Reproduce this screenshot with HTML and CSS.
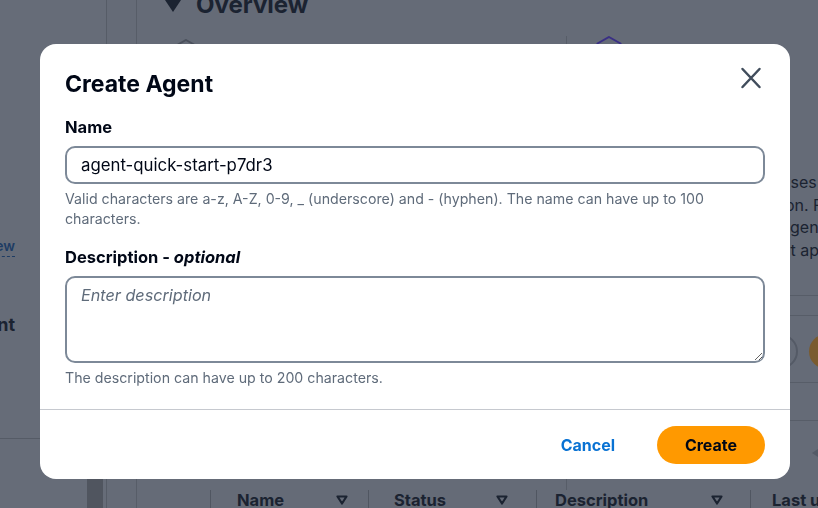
FILE: index.html
```html
<!DOCTYPE html>
<html lang="en">
<head>
<meta charset="utf-8">
<title>Create Agent</title>
<link rel="stylesheet" href="styles.css">
</head>
<body>
<div class="page">
  <aside class="sidebar">
    <div class="side-row"><span class="side-link">Overview</span></div>
    <div class="side-row side-row-title"><span class="side-title">Agent</span></div>
    <div class="side-rule"></div>
    <div class="side-scroll"></div>
  </aside>
  <div class="gutter"></div>
  <main class="main">
    <h2 class="overview">
      <svg class="caret" width="16" height="12" viewBox="0 0 16 12"><path d="M0 0 H16 L8 12 Z" fill="#1b2331"/></svg>
      Overview
    </h2>
    <div class="cards">
      <div class="card card-left">
        <svg class="hex" width="26" height="28" viewBox="0 0 26 28"><path d="M13 1 L24.5 7.5 L24.5 20.5 L13 27 L1.5 20.5 L1.5 7.5 Z" fill="none" stroke="#4a505c" stroke-width="2"/></svg>
      </div>
      <div class="card card-right">
        <svg class="hex" width="26" height="28" viewBox="0 0 26 28"><path d="M13 1 L24.5 7.5 L24.5 20.5 L13 27 L1.5 20.5 L1.5 7.5 Z" fill="none" stroke="#3a2f85" stroke-width="2"/></svg>
        <div class="right-col">
          <p class="card-text"><span>uses</span><span>ion. For</span><span>agent</span><span>nt ap</span></p>
          <div class="rule r1"></div>
          <div class="rule r2"></div>
          <div class="avatars"><span class="av av-outline"></span><span class="av av-fill"></span></div>
          <div class="rule r3"></div>
          <div class="rule r4"></div>
          <svg class="pager" width="9" height="12" viewBox="0 0 9 12"><path d="M9 0 V12 L0 6 Z" fill="#545a66"/></svg>
        </div>
      </div>
    </div>
    <div class="thead">
      <div class="th th-check"></div>
      <div class="th th-name">Name<svg class="sort sort-name" width="12" height="10" viewBox="0 0 12 10"><path d="M1.5 1.5 H10.5 L6 8.5 Z" fill="none" stroke="#1b2331" stroke-width="2.2" stroke-linejoin="round"/></svg></div>
      <div class="th th-status">Status<svg class="sort sort-status" width="12" height="10" viewBox="0 0 12 10"><path d="M1.5 1.5 H10.5 L6 8.5 Z" fill="none" stroke="#1b2331" stroke-width="2.2" stroke-linejoin="round"/></svg></div>
      <div class="th th-desc">Description<svg class="sort sort-desc" width="12" height="10" viewBox="0 0 12 10"><path d="M1.5 1.5 H10.5 L6 8.5 Z" fill="none" stroke="#1b2331" stroke-width="2.2" stroke-linejoin="round"/></svg></div>
      <div class="th th-last">Last updated</div>
    </div>
  </main>
</div>

<div class="backdrop">
  <div class="modal" role="dialog" aria-labelledby="modal-title">
    <div class="modal-body">
      <div class="modal-header">
        <h1 id="modal-title" class="modal-title">Create Agent</h1>
        <button class="close" aria-label="Close">
          <svg width="24" height="24" viewBox="0 0 24 24"><path d="M3.5 3 L20.5 21 M20.5 3 L3.5 21" stroke="#414d5c" stroke-width="2.5" fill="none" stroke-linecap="round"/></svg>
        </button>
      </div>
      <div class="field">
        <label class="label" for="name">Name</label>
        <input id="name" class="input" type="text" value="agent-quick-start-p7dr3">
        <div class="hint">Valid characters are a-z, A-Z, 0-9, _ (underscore) and - (hyphen). The name can have up to 100 characters.</div>
      </div>
      <div class="field">
        <label class="label" for="desc">Description - <i>optional</i></label>
        <textarea id="desc" class="textarea" placeholder="Enter description"></textarea>
        <div class="hint">The description can have up to 200 characters.</div>
      </div>
    </div>
    <div class="modal-footer">
      <button class="btn-link">Cancel</button>
      <button class="btn-primary">Create</button>
    </div>
  </div>
</div>
</body>
</html>
```

FILE: styles.css
```css
* { box-sizing: border-box; }
html, body { margin: 0; padding: 0; }
body {
  width: 818px;
  height: 508px;
  overflow: hidden;
  font-family: Inter, "Open Sans", Arial, sans-serif;
  background: #656b77;
  color: #1b2331;
}

/* ---------- dimmed background page ---------- */
.page {
  display: flex;
  height: 508px;
  width: 1100px;
}
.sidebar {
  width: 107px;
  flex: none;
  border-right: 1px solid #565c67;
  background: #666c78;
  padding-top: 236px;
}
.side-row {
  width: 15px;
  display: flex;
  justify-content: flex-end;
  white-space: nowrap;
}
.side-link {
  font-size: 14px;
  line-height: 20px;
  font-weight: 600;
  color: #1e3c64;
  border-bottom: 1px dashed #1e3c64;
}
.side-row-title { margin-top: 56px; }
.side-title {
  font-size: 18px;
  line-height: 24px;
  font-weight: 700;
  color: #1b2331;
}
.side-rule {
  margin-top: 101px;
  height: 1px;
  background: #555b66;
}
.side-scroll {
  margin: 40px 0 0 87px;
  width: 16px;
  height: 40px;
  background: #50555f;
}
.gutter {
  width: 30px;
  flex: none;
  border-right: 1px solid #575d68;
}
.main { flex: 1; }
.overview {
  margin: -10px 0 0;
  padding-left: 28px;
  font-size: 24px;
  font-weight: 700;
  color: #1b2331;
  line-height: 30px;
  display: flex;
  align-items: center;
  gap: 15px;
}
.caret { display: block; margin-top: 2px; }
.cards {
  display: flex;
  height: 454px;
  margin-top: 16px;
}
.card-left { width: 429px; padding: 3px 0 0 36px; }
.card-right {
  flex: 1;
  border-left: 1px solid #575d68;
  padding: 0 0 0 29px;
}
.hex { display: block; }
.right-col { margin-left: 185px; }
.card-text {
  margin: 107px 0 0;
  display: flex;
  flex-direction: column;
  font-size: 16px;
  line-height: 22.5px;
  color: #1b2331;
}
.rule { height: 1px; background: #575d68; }
.r1 { margin-top: 34px; }
.r2 { margin-top: 19px; }
.avatars { display: flex; gap: 11px; margin: 18px 0 0 -18px; }
.av { width: 35px; height: 35px; border-radius: 50%; display: block; flex: none; }
.av-outline { border: 2px solid #545a66; }
.av-fill { background: #7a5b2f; }
.r3 { margin-top: 13px; }
.r4 { margin-top: 37px; }
.pager { display: block; margin: 26px 0 0 31px; }

.thead {
  display: flex;
  height: 20px;
  font-size: 16.5px;
  line-height: 20px;
  font-weight: 700;
  color: #1b2331;
}
.th {
  display: flex;
  align-items: center;
  border-right: 1px solid #505661;
  white-space: nowrap;
}
.th-check { width: 74px; }
.th-name { width: 158px; padding-left: 26px; }
.th-status { width: 168px; padding-left: 25px; }
.th-desc { width: 214px; padding-left: 18px; }
.th-last { border: none; padding-left: 21px; }
.sort { display: block; margin-left: auto; }
.sort-name { margin-right: 20px; }
.sort-status { margin-right: 28px; }
.sort-desc { margin-right: 27px; }

/* ---------- modal ---------- */
.backdrop {
  position: fixed;
  inset: 0;
  display: flex;
  align-items: flex-start;
  justify-content: flex-start;
  padding: 44px 0 0 40px;
}
.modal {
  width: 750px;
  height: 435px;
  background: #ffffff;
  border-radius: 16px;
  display: flex;
  flex-direction: column;
  overflow: hidden;
  color: #000716;
}
.modal-body {
  padding: 25px 25px 21px;
  border-bottom: 1px solid #c6c9cf;
}
.modal-header {
  display: flex;
  align-items: flex-start;
  justify-content: space-between;
}
.modal-title {
  margin: 0;
  font-size: 23px;
  line-height: 30px;
  font-weight: 700;
  color: #000716;
}
.close {
  border: 0;
  background: none;
  padding: 0;
  margin: -3px 2px 0 0;
  width: 24px;
  height: 24px;
  cursor: pointer;
}
.close svg { display: block; }
.field { margin-top: 17px; display: flex; flex-direction: column; }
.label {
  font-size: 16.5px;
  line-height: 22px;
  font-weight: 700;
  color: #000716;
  margin-bottom: 8px;
}
.label i { font-weight: 700; }
.input, .textarea {
  width: 700px;
  border: 2px solid #7d8998;
  border-radius: 10px;
  font-family: inherit;
  font-size: 16.8px;
  color: #000716;
  padding: 0 14px;
  background: #fff;
  outline: none;
  margin: 0;
}
.input { height: 38px; }
.textarea {
  height: 87px;
  padding-top: 6px;
  font-size: 16.2px;
  line-height: 22px;
  resize: vertical;
  display: block;
}
.textarea::placeholder { color: #5f6b7a; font-style: italic; opacity: 1; }
.hint {
  margin-top: 5px;
  font-size: 14.2px;
  line-height: 20px;
  color: #5f6b7a;
}
.modal-footer {
  height: 69px;
  display: flex;
  align-items: center;
  justify-content: flex-end;
  padding: 0 25px;
  gap: 42px;
}
.btn-link {
  border: 0;
  background: none;
  font-family: inherit;
  font-size: 16px;
  font-weight: 700;
  color: #0972d3;
  padding: 0;
  height: 38px;
  cursor: pointer;
}
.btn-primary {
  border: 0;
  background: #ff9900;
  color: #000716;
  font-family: inherit;
  font-size: 16px;
  font-weight: 700;
  width: 108px;
  height: 38px;
  border-radius: 20px;
  cursor: pointer;
}
```
